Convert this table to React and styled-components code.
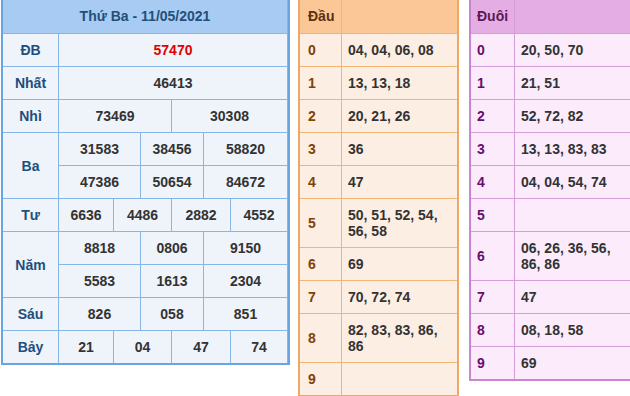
import React from "react";
import styled, { createGlobalStyle } from "styled-components";

const GlobalStyle = createGlobalStyle`
  html, body {
    margin: 0;
    padding: 0;
    background: #fff;
  }
  body {
    font-family: "Liberation Sans", Arial, sans-serif;
    font-size: 14px;
    font-weight: bold;
  }
`;

const Page = styled.div`
  display: flex;
  align-items: flex-start;
  padding-left: 1px;
  width: 640px;
  height: 396px;
  overflow: hidden;
`;

// ---------- result table ----------

const Results = styled.div`
  display: grid;
  grid-template-columns: 55px 54px 26px 30px 31px 26px 56px;
  gap: 1px;
  background: #86b6e6;
  border: 2px solid #6aa3de;
  border-top: 0;
  width: 285px;
  flex: none;
`;

const ResultsHead = styled.div`
  grid-column: 1 / -1;
  height: 33px;
  line-height: 33px;
  text-align: center;
  background: #a7cbf2;
  color: #244f79;
`;

const Label = styled.div`
  grid-row: span ${(p) => p.$rows || 1};
  display: flex;
  align-items: center;
  justify-content: center;
  background: #eff3fa;
  color: #1c4f7e;
`;

const Num = styled.div`
  grid-column: span ${(p) => p.$span};
  height: 32px;
  line-height: 32px;
  text-align: center;
  background: #eff3fa;
  color: ${(p) => (p.$red ? "#e30000" : "#333")};
`;

const spans = {
  1: [6],
  2: [3, 3],
  3: [2, 2, 2],
  4: [1, 2, 2, 1],
};

const prizes = [
  { label: "ĐB", lines: [["57470"]], red: true },
  { label: "Nhất", lines: [["46413"]] },
  { label: "Nhì", lines: [["73469", "30308"]] },
  { label: "Ba", lines: [["31583", "38456", "58820"], ["47386", "50654", "84672"]] },
  { label: "Tư", lines: [["6636", "4486", "2882", "4552"]] },
  { label: "Năm", lines: [["8818", "0806", "9150"], ["5583", "1613", "2304"]] },
  { label: "Sáu", lines: [["826", "058", "851"]] },
  { label: "Bảy", lines: [["21", "04", "47", "74"]] },
];

const ResultTable = () => (
  <Results>
    <ResultsHead>Thứ Ba - 11/05/2021</ResultsHead>
    {prizes.map((p) => (
      <React.Fragment key={p.label}>
        <Label $rows={p.lines.length}>{p.label}</Label>
        {p.lines.map((line, i) =>
          line.map((n, j) => (
            <Num key={`${i}-${j}`} $span={spans[line.length][j]} $red={p.red}>
              {n}
            </Num>
          ))
        )}
      </React.Fragment>
    ))}
  </Results>
);

// ---------- loto head / tail tables ----------

const themes = {
  dau: {
    line: "#f1b574",
    edge: "#eda865",
    head: "#fbc797",
    body: "#fdeee3",
    title: "#5c3010",
    digit: "#7e4405",
  },
  duoi: {
    line: "#d69ed9",
    edge: "#c986d0",
    head: "#e4aee5",
    body: "#fbebfb",
    title: "#5c1a50",
    digit: "#6a0e6a",
  },
};

const Loto = styled.div`
  display: grid;
  grid-template-columns: ${(p) => p.$first}px 115px;
  gap: 1px;
  background: ${(p) => p.$t.line};
  border: 2px solid ${(p) => p.$t.edge};
  border-top: 0;
  margin-left: ${(p) => p.$offset}px;
  flex: none;
`;

const LotoHead = styled.div`
  height: 33px;
  line-height: 33px;
  padding-left: ${(p) => p.$pad}px;
  background: ${(p) => p.$t.head};
  color: ${(p) => p.$t.title};
`;

const Digit = styled.div`
  display: flex;
  align-items: center;
  padding-left: ${(p) => p.$pad}px;
  background: ${(p) => p.$t.body};
  color: ${(p) => p.$t.digit};
`;

const Values = styled.div`
  min-height: 16px;
  padding: 8px 6px;
  line-height: 16px;
  background: ${(p) => p.$t.body};
  color: #333;
`;

const LotoTable = ({ title, kind, first, pad, offset, rows }) => {
  const t = themes[kind];
  return (
    <Loto $t={t} $first={first} $offset={offset}>
      <LotoHead $t={t} $pad={pad}>{title}</LotoHead>
      <LotoHead $t={t} $pad={pad} />
      {rows.map((v, i) => (
        <React.Fragment key={i}>
          <Digit $t={t} $pad={pad}>{i}</Digit>
          <Values $t={t}>{v}</Values>
        </React.Fragment>
      ))}
    </Loto>
  );
};

const dau = [
  "04, 04, 06, 08",
  "13, 13, 18",
  "20, 21, 26",
  "36",
  "47",
  "50, 51, 52, 54, 56, 58",
  "69",
  "70, 72, 74",
  "82, 83, 83, 86, 86",
  "",
];

const duoi = [
  "20, 50, 70",
  "21, 51",
  "52, 72, 82",
  "13, 13, 83, 83",
  "04, 04, 54, 74",
  "",
  "06, 26, 36, 56, 86, 86",
  "47",
  "08, 18, 58",
  "69",
];

export default function App() {
  return (
    <>
      <GlobalStyle />
      <Page>
        <ResultTable />
        <LotoTable title="Đầu" kind="dau" first={41} pad={8} offset={8} rows={dau} />
        <LotoTable title="Đuôi" kind="duoi" first={43} pad={6} offset={10} rows={duoi} />
      </Page>
    </>
  );
}
